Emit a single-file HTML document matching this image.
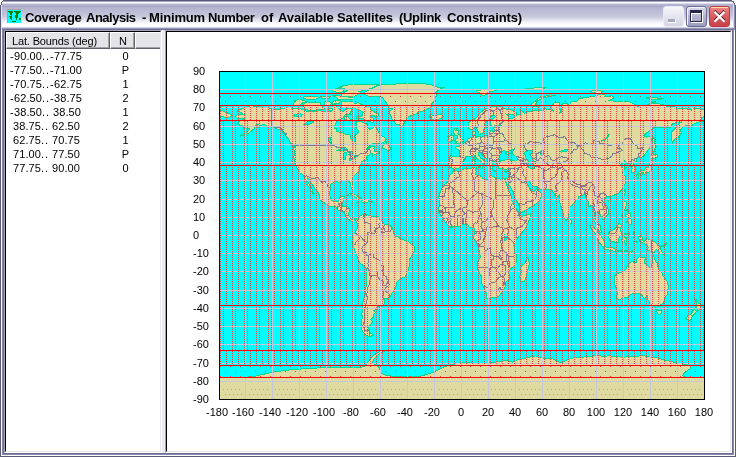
<!DOCTYPE html>
<html><head><meta charset="utf-8"><title>Coverage Analysis</title>
<style>
html,body{margin:0;padding:0;}
span,.yl,.xl{will-change:transform;}
body{width:736px;height:457px;overflow:hidden;position:relative;background:#fff;font-family:"Liberation Sans",sans-serif;font-size:11px;color:#000;}
div,span{position:absolute;box-sizing:border-box;}
#win{left:0;top:0;width:736px;height:457px;background:#e0dfe3;}
.tw{top:10px;font-weight:bold;font-size:13px;white-space:nowrap;line-height:15px;}
.fr{background:#5c5c7c;}
</style></head><body>
<div id="win"></div>
<svg width="736" height="30" shape-rendering="crispEdges" style="position:absolute;left:0;top:0"><rect x="0" y="0" width="736" height="1" fill="#5a5a7a"/><rect x="0" y="1" width="736" height="1" fill="#a2a2c2"/><rect x="0" y="2" width="736" height="1" fill="#ffffff"/><rect x="0" y="3" width="736" height="1" fill="#dcdcec"/><rect x="0" y="4" width="736" height="1" fill="#b6b6d2"/><rect x="0" y="5" width="736" height="1" fill="#b2b2ce"/><rect x="0" y="6" width="736" height="1" fill="#a6a6c6"/><rect x="0" y="7" width="736" height="1" fill="#b4b4d0"/><rect x="0" y="8" width="736" height="1" fill="#b6b6d1"/><rect x="0" y="9" width="736" height="1" fill="#b8b8d2"/><rect x="0" y="10" width="736" height="1" fill="#babad4"/><rect x="0" y="11" width="736" height="1" fill="#bcbcd5"/><rect x="0" y="12" width="736" height="1" fill="#bebed6"/><rect x="0" y="13" width="736" height="1" fill="#c0c0d8"/><rect x="0" y="14" width="736" height="1" fill="#c2c2d9"/><rect x="0" y="15" width="736" height="1" fill="#c5c5db"/><rect x="0" y="16" width="736" height="1" fill="#c9c9de"/><rect x="0" y="17" width="736" height="1" fill="#cfcfe2"/><rect x="0" y="18" width="736" height="1" fill="#d6d6e7"/><rect x="0" y="19" width="736" height="1" fill="#dedeec"/><rect x="0" y="20" width="736" height="1" fill="#e6e6f1"/><rect x="0" y="21" width="736" height="1" fill="#eeeef6"/><rect x="0" y="22" width="736" height="1" fill="#f4f4fa"/><rect x="0" y="23" width="736" height="1" fill="#fafafd"/><rect x="0" y="24" width="736" height="1" fill="#ffffff"/><rect x="0" y="25" width="736" height="1" fill="#ffffff"/><rect x="0" y="26" width="736" height="1" fill="#fcfcfe"/><rect x="0" y="27" width="736" height="1" fill="#d2d2e2"/><rect x="0" y="28" width="736" height="1" fill="#9696b6"/><rect x="0" y="29" width="736" height="1" fill="#6e6e92"/><rect x="0" y="0" width="1" height="30" fill="#5a5a7a"/><rect x="735" y="0" width="1" height="30" fill="#5a5a7a"/><rect x="1" y="3" width="1" height="27" fill="#e6e6f4"/><rect x="734" y="3" width="1" height="27" fill="#8c8cac"/><rect x="733" y="3" width="1" height="25" fill="#d8d8ea"/><path d="M0 0h3v1h-1v1h-1v1h-1zM0 3h1v2h-1z" fill="#fff"/><path d="M3 0h1v1h-1zM2 1h1v1h-1zM1 2h1v1h-1zM0 5h1v1h-1z" fill="#5a5a7a"/><path d="M1 3h1v2h-1z" fill="#5a5a7a"/><path d="M736 0h-4v1h1v1h1v1h1v2h1z" fill="#fff"/><path d="M731 0h1v1h2v1h-2zM733 2h1v1h-1zM734 3h1v2h-1z" fill="#5a5a7a"/></svg>
<div style="left:0;top:30px;width:1px;height:427px;background:#5a5a7a"></div>
<div style="left:1px;top:30px;width:1px;height:425px;background:#fff"></div>
<div style="left:2px;top:28px;width:1px;height:427px;background:#8888a8"></div>
<div style="left:3px;top:29px;width:1px;height:425px;background:#6e6e92"></div>
<div style="left:735px;top:30px;width:1px;height:427px;background:#5a5a7a"></div>
<div style="left:734px;top:30px;width:1px;height:425px;background:#fff"></div>
<div style="left:733px;top:28px;width:1px;height:427px;background:#8888a8"></div>
<div style="left:732px;top:29px;width:1px;height:425px;background:#6e6e92"></div>
<div style="left:0;top:456px;width:736px;height:1px;background:#5a5a7a"></div>
<div style="left:1px;top:455px;width:734px;height:1px;background:#fff"></div>
<div style="left:2px;top:454px;width:732px;height:1px;background:#8888a8"></div>
<div style="left:3px;top:453px;width:730px;height:1px;background:#6e6e92"></div>
<svg width="15" height="15" style="position:absolute;left:7px;top:9px" shape-rendering="crispEdges"><rect x="0" y="0" width="14" height="1" fill="#b09c94"/><rect x="0" y="0" width="1" height="14" fill="#b09c94"/><rect x="1" y="1" width="13" height="13" fill="#00ffff"/><path d="M1 2h5v1h-5zM7 2h7v1h-7zM2 3h4v1h-4zM8 3h5v1h-5zM3 4h2v1h-2zM9 4h3v1h-3zM3 5h2v1h-2zM9 5h2v1h-2zM4 6h1v1h-1zM8 6h3v1h-3zM2 7h3v1h-3zM8 7h3v1h-3zM3 8h2v1h-2zM8 8h3v1h-3zM3 9h2v1h-2zM9 9h1v1h-1zM12 9h2v1h-2zM4 10h1v1h-1zM9 10h1v1h-1zM12 10h2v1h-2zM5 12h4v1h-4z" fill="#008000"/></svg>
<span class="tw" style="left:25.3px;letter-spacing:-0.36px">Coverage</span>
<span class="tw" style="left:86.0px;letter-spacing:-0.5px">Analysis</span>
<span class="tw" style="left:141.5px;letter-spacing:0px">-</span>
<span class="tw" style="left:148.6px;letter-spacing:-0.15px">Minimum</span>
<span class="tw" style="left:208.4px;letter-spacing:-0.48px">Number</span>
<span class="tw" style="left:261px;letter-spacing:0px">of</span>
<span class="tw" style="left:277.6px;letter-spacing:-0.12px">Available</span>
<span class="tw" style="left:336.8px;letter-spacing:-0.11px">Satellites</span>
<span class="tw" style="left:399.4px;letter-spacing:-0.3px">(Uplink</span>
<span class="tw" style="left:446.6px;letter-spacing:-0.13px">Constraints)</span>
<div style="left:663px;top:6px;width:21px;height:21px;border-radius:3px;background:linear-gradient(#f6f6fb,#d4d4e4);border:1px solid #ececf6;"></div>
<div style="left:668px;top:19px;width:8px;height:4px;background:#a8a8bc;border-bottom:1px solid #fff;border-right:1px solid #fff"></div>
<div style="left:686px;top:6px;width:21px;height:21px;border-radius:3px;background:linear-gradient(#dcdcea,#b4b4d0 50%,#9c9cbe);border:1px solid #6c6c94;box-shadow:inset 1px 1px 0 0 #f4f4fa"></div>
<div style="left:691px;top:11px;width:12px;height:12px;border:1px solid #fff;border-top-width:3px;"></div><div style="left:690px;top:10px;width:12px;height:12px;border:1px solid #26264e;border-top-width:3px;"></div>
<div style="left:709px;top:6px;width:21px;height:21px;border-radius:3px;background:linear-gradient(#f09090 0,#e87878 15%,#d85c60 50%,#cc4850 85%,#c84048 100%);border:1px solid #c03840;"></div>
<div style="left:711px;top:7px;width:17px;height:1px;background:#ffdca8"></div>
<svg width="21" height="21" style="position:absolute;left:709px;top:6px"><path d="M5.5 5L15.5 15M15.5 5L5.5 15" stroke="#501018" stroke-width="2.6" stroke-linecap="butt"/><path d="M5.5 5.8L15.5 15.8M15.5 5.8L5.5 15.8" stroke="#fff" stroke-width="2.3" stroke-linecap="butt"/></svg>
<!-- left pane -->
<div style="left:4px;top:30px;width:158px;height:423px;background:#fff;border-left:1px solid #a4a4b8;border-top:1px solid #a4a4b8;border-right:1px solid #fff;border-bottom:1px solid #fff;"></div>
<div style="left:5px;top:31px;width:156px;height:421px;border-left:1px solid #000;border-top:1px solid #000;border-right:1px solid #e8e8f0;border-bottom:1px solid #e8e8f0;"></div>
<!-- header -->
<div style="left:6px;top:32px;width:154px;height:17px;overflow:hidden"><div class="hd" style="left:0px;top:0px;width:104px;height:17px;"></div>
<div class="hd" style="left:104px;top:0px;width:25px;height:17px;"></div>
<div class="hd" style="left:129px;top:0px;width:60px;height:17px;"></div></div>
<style>
.hd{background:#e4e3e8;border-left:1px solid #fff;border-top:1px solid #fff;border-right:1px solid #646068;border-bottom:1px solid #646068;}
.hd:after{content:"";position:absolute;right:0;bottom:0;left:0;top:0;border-right:1px solid #a4a3a8;border-bottom:1px solid #a4a3a8;}
.row{left:0px;width:160px;height:14px;}
.row span{top:0;line-height:14px;white-space:pre;}
.c2{left:110px;width:31px;text-align:center;}
.yl{left:193px;width:40px;text-align:left;line-height:14px;height:14px;}
.xl{top:405px;width:40px;text-align:center;line-height:14px;height:14px;}
</style>
<span style="left:12px;top:34px;line-height:14px;white-space:nowrap;letter-spacing:-0.15px">Lat. Bounds (deg)</span>
<span style="left:119px;top:34px;line-height:14px;">N</span>
<div class="row" style="top:49px"><span style="left:10.2px;letter-spacing:0.1px">-</span><span style="left:14px;letter-spacing:0.1px">90.00</span><span style="left:42.3px;letter-spacing:0.9px">..</span><span style="left:50.2px;letter-spacing:0.1px">-</span><span style="left:54px;letter-spacing:0.1px">77.75</span><span class="c2">0</span></div>
<div class="row" style="top:63px"><span style="left:10.2px;letter-spacing:0.1px">-</span><span style="left:14px;letter-spacing:0.1px">77.50</span><span style="left:42.3px;letter-spacing:0.9px">..</span><span style="left:50.2px;letter-spacing:0.1px">-</span><span style="left:54px;letter-spacing:0.1px">71.00</span><span class="c2">P</span></div>
<div class="row" style="top:77px"><span style="left:10.2px;letter-spacing:0.1px">-</span><span style="left:14px;letter-spacing:0.1px">70.75</span><span style="left:42.3px;letter-spacing:0.9px">..</span><span style="left:50.2px;letter-spacing:0.1px">-</span><span style="left:54px;letter-spacing:0.1px">62.75</span><span class="c2">1</span></div>
<div class="row" style="top:91px"><span style="left:10.2px;letter-spacing:0.1px">-</span><span style="left:14px;letter-spacing:0.1px">62.50</span><span style="left:42.3px;letter-spacing:0.9px">..</span><span style="left:50.2px;letter-spacing:0.1px">-</span><span style="left:54px;letter-spacing:0.1px">38.75</span><span class="c2">2</span></div>
<div class="row" style="top:105px"><span style="left:10.2px;letter-spacing:0.1px">-</span><span style="left:14px;letter-spacing:0.1px">38.50</span><span style="left:42.3px;letter-spacing:0.9px">..</span><span style="left:53px;letter-spacing:0.1px">38.50</span><span class="c2">1</span></div>
<div class="row" style="top:119px"><span style="left:13px;letter-spacing:0.1px">38.75</span><span style="left:41.3px;letter-spacing:0.9px">..</span><span style="left:52px;letter-spacing:0.1px">62.50</span><span class="c2">2</span></div>
<div class="row" style="top:133px"><span style="left:13px;letter-spacing:0.1px">62.75</span><span style="left:41.3px;letter-spacing:0.9px">..</span><span style="left:52px;letter-spacing:0.1px">70.75</span><span class="c2">1</span></div>
<div class="row" style="top:147px"><span style="left:13px;letter-spacing:0.1px">71.00</span><span style="left:41.3px;letter-spacing:0.9px">..</span><span style="left:52px;letter-spacing:0.1px">77.50</span><span class="c2">P</span></div>
<div class="row" style="top:161px"><span style="left:13px;letter-spacing:0.1px">77.75</span><span style="left:41.3px;letter-spacing:0.9px">..</span><span style="left:52px;letter-spacing:0.1px">90.00</span><span class="c2">0</span></div>

<!-- splitter -->
<div style="left:162px;top:30px;width:3px;height:423px;background:#ececf0"></div>
<!-- right pane -->
<div style="left:165px;top:30px;width:567px;height:423px;background:#fff;border-left:1px solid #a4a4b8;border-top:1px solid #a4a4b8;border-right:1px solid #fff;border-bottom:1px solid #fff;"></div>
<div style="left:166px;top:31px;width:565px;height:421px;border-left:1px solid #000;border-top:1px solid #000;border-right:1px solid #e8e8f0;border-bottom:1px solid #e8e8f0;"></div>
<div class="yl" style="top:64px">90</div><div class="yl" style="top:82px">80</div><div class="yl" style="top:100px">70</div><div class="yl" style="top:119px">60</div><div class="yl" style="top:137px">50</div><div class="yl" style="top:155px">40</div><div class="yl" style="top:173px">30</div><div class="yl" style="top:192px">20</div><div class="yl" style="top:210px">10</div><div class="yl" style="top:228px">0</div><div class="yl" style="top:246px">-10</div><div class="yl" style="top:264px">-20</div><div class="yl" style="top:283px">-30</div><div class="yl" style="top:301px">-40</div><div class="yl" style="top:319px">-50</div><div class="yl" style="top:337px">-60</div><div class="yl" style="top:356px">-70</div><div class="yl" style="top:374px">-80</div><div class="yl" style="top:392px">-90</div>
<div class="xl" style="left:197px">-180</div><div class="xl" style="left:223px">-160</div><div class="xl" style="left:250px">-140</div><div class="xl" style="left:277px">-120</div><div class="xl" style="left:304px">-100</div><div class="xl" style="left:331px">-80</div><div class="xl" style="left:358px">-60</div><div class="xl" style="left:385px">-40</div><div class="xl" style="left:412px">-20</div><div class="xl" style="left:441px">0</div><div class="xl" style="left:468px">20</div><div class="xl" style="left:495px">40</div><div class="xl" style="left:522px">60</div><div class="xl" style="left:549px">80</div><div class="xl" style="left:576px">100</div><div class="xl" style="left:603px">120</div><div class="xl" style="left:630px">140</div><div class="xl" style="left:657px">160</div><div class="xl" style="left:684px">180</div>
<svg width="486" height="329" viewBox="0 0 486 329" shape-rendering="crispEdges" style="position:absolute;left:219px;top:71px">
<defs>
<pattern id="p1" x="1" y="0" width="6" height="2" patternUnits="userSpaceOnUse"><rect x="0" y="0" width="1" height="1" fill="#ff3434"/></pattern>
<pattern id="p2" x="1" y="0" width="12" height="2" patternUnits="userSpaceOnUse"><rect x="0" y="0" width="1" height="1" fill="#ff3434"/><rect x="3" y="0" width="1" height="1" fill="#ff3434"/></pattern>
<pattern id="pp" x="1" y="25" width="10" height="10" patternUnits="userSpaceOnUse"><rect x="0" y="0" width="1" height="1" fill="#ff3434"/><rect x="5" y="5" width="1" height="1" fill="#ff3434"/></pattern>
</defs>
<rect width="486" height="329" fill="#00ffff"/>
<path d="M31.7 34.6L37.7 35.5L43.1 36.2L49.8 36.8L52.5 37.7L57.9 38.8L62.0 37.9L67.4 36.8L70.1 36.0L74.1 37.9L79.5 37.3L84.9 38.8L87.6 40.6L94.3 40.8L97.0 40.2L101.0 39.7L105.1 41.0L110.5 40.6L113.2 40.0L113.8 37.9L113.2 35.1L114.5 33.3L117.2 34.2L118.6 36.9L121.3 39.1L123.9 40.6L126.6 38.8L128.0 37.3L132.0 37.3L132.7 39.7L130.7 42.4L132.7 43.7L126.6 43.3L125.3 45.1L123.9 47.5L119.9 48.8L117.2 51.5L115.2 55.2L115.2 57.5L117.2 57.9L117.9 60.6L122.6 61.5L128.0 63.7L131.6 64.1L131.8 67.9L133.4 69.7L134.7 71.2L136.1 70.7L136.3 67.9L135.4 64.8L138.8 62.5L139.4 59.7L137.4 57.5L138.1 55.2L137.4 50.8L142.8 51.0L148.2 53.3L148.9 57.0L150.9 58.3L153.6 57.4L155.6 54.4L158.3 58.4L159.6 61.5L161.7 63.9L165.0 66.1L167.3 68.8L165.7 70.7L161.7 72.8L156.3 72.8L152.9 73.0L149.5 76.1L146.8 79.0L149.5 77.9L152.2 75.2L155.6 75.2L154.9 77.4L155.6 80.3L159.6 81.0L160.3 82.0L156.3 83.4L153.6 84.9L153.6 82.5L152.2 82.5L148.2 84.9L147.3 87.1L148.2 88.5L145.5 89.4L142.8 90.5L142.8 92.5L140.8 94.3L140.1 97.1L140.5 99.8L138.8 101.6L136.1 103.8L133.4 106.6L133.0 109.8L134.0 113.5L134.7 116.2L134.0 118.6L132.7 117.5L131.1 113.8L131.1 111.7L129.3 109.8L127.3 110.2L125.3 109.1L122.6 109.3L121.9 111.3L119.9 111.1L116.5 110.4L114.5 111.3L111.8 113.8L111.4 117.1L110.7 122.6L111.1 125.3L112.8 129.3L114.5 130.6L116.5 131.0L119.2 130.6L120.6 128.1L120.8 126.2L123.3 125.3L125.3 125.5L124.6 129.0L123.9 131.7L123.3 134.4L122.9 135.5L125.3 135.7L128.0 135.5L130.3 137.2L130.0 140.8L129.7 144.5L130.7 146.3L132.0 148.1L133.4 148.5L135.0 147.4L136.7 147.4L138.4 148.8L138.8 149.4L140.8 145.4L141.7 144.3L144.2 143.7L145.9 141.9L146.4 143.5L145.8 145.4L148.2 143.5L150.5 144.8L153.6 145.2L156.3 145.4L159.0 145.0L160.3 147.2L161.0 149.0L163.0 149.9L165.3 153.6L168.4 153.7L171.1 154.5L173.1 156.5L174.5 160.9L175.1 163.6L175.1 164.5L177.2 165.4L179.2 165.8L182.5 168.7L184.6 168.9L187.3 169.8L190.0 170.9L192.2 173.2L194.9 174.2L195.5 177.6L195.3 180.9L193.3 184.0L192.0 186.4L190.2 188.6L190.0 191.8L190.0 196.4L189.0 200.0L187.5 203.7L186.1 206.2L183.9 206.4L181.9 207.7L179.2 209.5L177.2 211.9L177.0 215.5L175.1 219.2L172.4 223.2L170.4 226.5L168.4 228.1L165.7 227.5L163.8 226.5L165.4 229.2L165.7 231.0L164.9 233.7L161.7 235.4L159.0 235.4L158.6 238.3L154.9 239.2L156.3 241.9L154.5 243.8L154.3 246.5L151.6 248.3L153.6 250.5L151.6 253.8L149.5 256.2L150.3 259.8L150.2 261.1L154.5 264.2L150.9 265.6L147.5 264.7L145.5 262.9L143.5 260.2L142.1 255.6L142.1 252.0L142.5 249.2L143.7 246.5L142.8 243.8L143.2 240.1L143.5 236.5L143.5 232.3L144.8 228.3L146.2 222.8L146.2 219.2L147.5 213.7L147.5 207.3L147.9 200.9L147.7 197.8L145.5 195.5L141.5 192.7L139.7 189.6L138.5 186.4L136.7 181.8L135.0 177.3L133.1 175.4L133.0 172.7L134.3 170.7L134.7 169.1L133.4 168.5L133.5 166.3L134.7 164.5L134.7 163.0L136.3 161.8L136.7 159.9L138.4 157.6L138.1 154.5L138.2 152.1L137.1 150.8L136.9 149.4L135.4 148.3L134.3 149.6L134.2 151.2L132.7 150.5L131.0 149.6L129.7 149.0L128.4 146.6L127.0 146.3L126.9 144.5L124.6 140.8L123.3 140.4L121.3 139.5L119.2 139.0L117.2 136.3L115.2 135.0L112.5 135.9L109.8 134.8L107.8 133.5L105.1 131.7L102.4 129.9L100.4 127.5L100.6 125.3L99.7 122.6L97.0 118.9L95.1 116.6L93.6 113.8L91.6 111.7L90.3 108.0L88.1 106.7L88.0 108.9L89.6 112.0L90.9 114.4L92.6 117.1L93.6 120.2L95.0 122.2L94.0 122.6L91.6 119.3L91.3 117.1L88.9 114.9L87.8 113.8L88.6 112.6L86.6 109.8L85.3 106.7L84.6 104.9L83.1 102.9L80.2 101.6L78.4 98.0L77.5 95.6L75.7 92.5L75.0 90.9L75.3 88.0L74.8 86.1L75.4 82.5L75.4 80.1L74.5 76.5L76.8 76.5L76.8 75.2L74.8 73.4L71.4 71.6L70.1 68.8L67.4 65.6L66.0 63.4L63.3 60.6L61.3 58.3L58.6 58.3L56.6 57.0L53.9 55.7L51.2 55.2L48.5 55.2L45.8 53.7L43.1 53.7L41.1 55.5L38.0 56.6L38.4 53.9L40.4 53.0L37.7 53.9L35.7 56.1L35.0 57.9L31.7 60.6L29.0 62.5L25.6 63.9L22.9 64.8L20.9 65.2L24.2 62.8L26.9 61.5L29.6 59.7L30.6 57.5L28.3 57.9L26.3 57.4L24.2 57.0L24.2 55.2L20.9 54.3L18.9 52.4L20.2 50.1L20.9 49.3L24.9 48.8L25.6 47.0L22.9 47.0L18.2 47.0L16.2 45.0L18.9 43.7L22.2 43.9L24.9 43.7L22.9 42.4L21.6 41.1L18.2 39.9L19.5 38.9L22.9 37.9L25.6 36.4L29.6 35.5ZM144.2 22.0L150.9 18.7L154.9 16.5L157.6 14.7L164.4 13.6L175.1 13.1L188.6 12.5L202.1 12.3L212.9 13.8L218.3 16.0L225.7 16.0L219.6 18.7L216.9 21.5L218.3 24.2L215.6 26.9L216.2 29.7L212.9 32.4L212.9 34.2L212.9 36.0L208.8 37.9L206.1 39.7L200.7 40.6L196.7 43.3L192.0 44.8L188.6 46.1L187.3 48.8L185.2 51.5L184.6 54.6L182.5 55.3L180.5 53.9L177.2 53.3L175.1 50.6L173.1 47.9L171.8 45.1L170.4 42.4L170.4 39.7L173.8 37.9L169.1 36.9L169.1 34.6L167.7 32.4L165.7 29.7L163.7 26.9L159.0 25.6L153.6 26.0L149.5 25.5L146.8 23.8ZM153.6 51.7L150.9 50.6L146.8 49.7L143.5 47.0L137.4 47.0L138.1 45.1L142.8 45.1L144.2 41.5L141.5 39.7L136.7 37.9L136.1 36.4L128.0 36.9L122.6 36.0L122.6 30.6L128.0 30.0L133.4 30.2L134.7 32.4L139.4 31.8L142.8 33.7L147.5 35.7L150.9 36.9L152.2 38.8L156.3 41.5L159.6 43.0L159.0 45.1L156.3 46.1L154.9 44.2L151.6 45.1L154.9 47.9L154.3 50.1ZM83.5 34.2L87.6 30.9L95.7 31.5L101.0 31.1L101.7 34.2L105.8 37.3L105.1 38.9L99.7 38.8L94.3 39.3L88.9 39.1L85.5 37.9L84.2 36.0ZM74.1 33.3L76.1 34.8L80.2 34.2L84.2 31.5L86.9 30.6L84.2 29.1L79.5 28.7L74.8 29.7L75.4 31.5ZM122.6 25.1L134.7 25.6L137.4 24.2L141.5 21.5L140.1 20.5L146.8 19.1L153.6 16.9L159.0 14.5L160.3 13.4L148.2 13.1L134.7 13.3L125.3 14.5L119.9 16.0L125.3 17.8L128.0 19.6L125.3 21.5L122.6 23.3ZM113.2 18.7L119.9 16.9L123.9 18.7L125.3 20.5L119.9 21.8L114.5 20.5ZM113.2 24.6L119.9 24.9L123.9 25.3L132.0 26.4L134.7 26.9L134.0 28.4L126.6 28.9L118.6 28.6L117.9 26.4ZM84.9 27.5L90.3 28.7L97.0 28.0L100.4 26.4L95.7 25.1L88.9 25.6L84.9 26.0ZM102.4 27.5L110.5 27.8L111.1 25.5L105.1 25.1L102.4 26.0ZM113.8 33.1L120.6 32.4L121.3 30.0L114.5 29.7L113.8 31.5ZM105.1 34.2L111.8 34.0L112.5 31.5L109.1 30.0L105.1 31.1ZM108.5 38.8L113.2 39.5L113.8 37.9L111.1 36.9ZM125.3 45.1L129.3 45.7L130.7 47.9L134.0 48.8L130.7 50.1L127.3 49.3L125.3 47.9ZM162.6 77.6L165.0 72.5L167.6 70.7L167.1 73.4L170.4 74.7L171.5 77.9L170.4 79.4L167.7 78.9L165.7 77.9ZM69.7 71.9L74.1 73.4L76.3 76.3L73.4 75.6ZM128.1 124.6L130.7 122.6L134.0 122.4L138.8 125.1L142.5 127.7L138.1 128.2L137.4 126.8L134.7 125.0L132.0 123.7L130.0 124.4ZM142.3 130.8L144.2 128.2L148.2 128.4L150.3 130.6L147.5 131.3L145.9 132.2L144.2 131.3ZM137.0 131.0L139.7 131.3L139.7 131.9L137.0 131.7ZM152.0 130.8L154.0 131.0L154.0 131.7L152.0 131.7ZM212.2 43.5L214.9 45.0L218.3 43.9L220.9 43.3L222.7 43.9L224.2 45.7L222.3 47.3L217.6 49.0L214.2 48.2L211.9 48.1L212.9 47.0L210.2 46.2L212.9 45.5L210.2 45.0ZM234.8 73.2L237.8 72.8L241.2 72.1L244.4 71.2L243.6 70.7L244.8 68.7L242.9 67.9L242.5 66.6L240.9 65.0L240.3 63.4L238.5 62.5L239.8 60.6L240.1 59.5L237.1 59.4L238.5 57.7L235.8 57.7L234.7 59.7L234.1 61.5L235.8 63.4L236.0 64.6L238.1 64.5L238.5 66.5L238.2 67.4L236.4 67.4L236.8 68.8L235.5 70.1L237.8 70.8L236.4 71.6ZM234.4 69.4L234.1 67.2L235.0 65.0L232.7 63.7L231.0 65.0L229.0 65.7L229.7 67.6L228.6 69.7L229.7 70.7L231.7 70.1ZM257.3 19.6L264.1 18.7L270.8 18.0L278.9 18.4L274.8 20.2L268.1 21.1L271.5 22.4L267.4 23.6L264.7 24.7L261.4 23.3L260.7 22.0L257.3 20.9ZM311.9 34.2L314.6 35.5L319.3 35.7L316.6 33.3L317.9 30.6L320.6 28.4L326.0 26.4L331.4 25.3L336.8 24.2L331.4 24.0L326.0 25.3L319.3 27.3L315.9 30.6L312.6 32.8ZM370.5 20.5L377.2 19.1L384.0 20.5L381.3 22.4L374.5 21.5ZM427.1 26.9L433.8 26.0L439.2 27.3L444.6 27.8L440.5 28.2L431.1 28.2ZM431.1 30.7L435.2 30.0L435.8 31.1L432.5 31.5ZM483.0 34.6L485.0 34.2L485.0 35.3L483.0 35.3ZM0.0 34.2L3.4 34.6L3.4 35.1L0.0 35.3ZM305.8 17.8L316.6 16.9L326.0 16.9L323.3 18.4L312.6 18.7ZM230.4 97.1L229.7 94.0L230.6 89.8L230.1 86.1L231.7 84.9L235.8 85.2L239.8 85.4L240.7 83.4L240.9 80.7L239.1 78.3L236.4 77.2L236.2 76.1L238.5 75.6L240.3 75.8L240.1 73.9L241.2 74.5L242.8 74.3L244.5 73.0L244.8 71.6L247.2 70.8L248.2 69.4L249.0 67.9L250.6 67.0L252.2 66.8L254.0 66.6L254.4 65.6L253.7 63.4L253.5 60.6L255.3 60.3L256.8 59.4L256.4 61.5L257.1 62.1L256.0 63.4L255.7 64.6L257.2 65.6L257.3 66.1L258.9 65.7L260.7 65.4L261.8 66.3L264.5 65.4L267.4 64.8L268.8 65.4L269.4 64.5L270.8 63.7L270.8 61.5L271.5 59.9L272.8 59.4L274.2 60.6L275.2 60.1L275.2 58.3L274.2 57.4L274.2 56.6L276.9 55.9L280.2 56.1L283.2 55.3L280.9 54.3L277.5 54.4L273.5 55.3L271.5 54.3L271.2 52.4L271.2 50.1L272.8 48.8L275.5 46.4L276.6 45.3L274.8 44.6L272.4 44.8L271.2 47.0L270.1 48.4L267.4 50.1L265.7 52.1L265.7 53.9L267.8 55.2L267.2 56.4L265.0 57.7L264.7 59.7L264.1 62.1L262.0 62.5L261.6 63.5L260.0 63.5L259.6 62.1L258.7 59.7L257.7 57.4L256.8 56.4L256.8 55.3L255.3 57.2L253.3 58.6L251.7 58.6L250.0 57.4L249.4 55.2L249.2 52.4L250.6 50.6L254.0 48.8L256.6 47.3L258.7 45.5L260.0 43.3L262.0 41.1L263.4 40.2L266.1 38.2L268.8 36.9L272.1 36.0L276.2 35.1L280.2 35.1L284.3 36.4L282.9 37.5L287.0 38.0L291.0 38.6L297.1 41.0L298.0 42.8L296.4 44.1L292.3 43.7L289.0 43.1L287.0 43.0L289.4 45.1L289.4 47.1L292.3 47.9L293.7 47.0L296.4 46.8L297.1 44.6L299.8 43.3L301.8 43.9L302.0 41.5L301.5 39.7L304.5 40.2L305.1 42.4L307.8 41.1L313.9 39.7L315.9 40.0L320.6 39.3L324.0 39.1L324.0 37.5L329.4 38.4L332.8 39.1L334.8 40.2L332.8 37.9L332.5 35.1L334.8 32.4L336.8 30.9L340.2 31.8L340.2 34.2L340.8 37.9L341.5 39.7L340.2 42.4L342.2 41.5L342.9 38.8L342.2 35.1L343.5 32.4L347.6 32.9L351.0 33.3L352.3 30.6L358.4 30.0L359.7 27.8L366.4 26.4L374.5 25.6L382.6 22.9L386.7 24.2L385.3 25.5L392.7 24.9L395.4 26.6L390.7 29.3L394.7 30.2L401.5 30.6L409.6 30.2L413.6 32.4L417.0 34.2L418.3 35.5L421.7 34.2L427.1 34.2L431.1 32.8L432.5 32.0L439.2 32.6L444.6 33.7L448.0 35.3L455.4 35.3L458.1 37.5L462.1 37.5L467.5 37.7L472.2 39.1L471.5 36.9L475.6 37.1L481.0 37.9L485.0 38.8L485.0 45.7L482.3 47.0L483.7 50.2L481.0 50.6L477.6 51.9L474.2 53.3L472.2 55.2L467.5 54.6L464.1 55.5L462.5 57.9L461.4 59.2L462.4 61.9L460.8 64.6L458.1 67.6L456.0 68.1L453.6 71.6L452.3 67.9L452.3 64.3L452.7 60.6L455.4 58.4L458.1 54.3L460.8 52.4L463.4 50.6L458.7 51.9L454.0 52.1L451.3 56.1L448.6 56.6L443.2 56.1L435.2 56.4L431.1 59.4L427.7 61.9L424.8 64.6L427.7 66.1L430.4 65.7L432.9 67.4L431.8 70.7L431.8 73.4L431.1 76.5L429.1 79.2L426.4 82.5L424.4 85.2L421.7 86.5L420.1 85.8L418.6 87.4L417.2 89.1L417.2 90.2L414.3 92.2L415.3 94.2L416.8 97.1L416.8 99.8L415.6 100.9L412.9 101.8L412.7 99.8L413.1 97.1L412.3 95.6L410.9 95.3L411.3 92.7L410.0 91.6L406.9 93.1L405.9 93.8L406.9 90.7L405.5 90.0L402.8 92.9L401.2 93.4L402.1 95.3L402.8 96.5L405.5 96.0L407.5 96.5L405.2 98.4L403.2 100.7L404.8 103.5L406.6 106.2L406.7 108.0L406.2 109.8L406.9 110.7L406.2 112.9L404.8 115.3L403.5 118.0L401.5 120.0L400.1 121.9L397.4 123.1L395.8 123.9L392.7 125.3L391.1 125.7L391.1 127.5L390.3 125.3L388.4 125.1L386.2 127.1L385.0 129.9L386.0 132.6L388.3 135.3L389.6 139.9L389.6 143.0L387.1 145.4L386.0 147.2L384.0 148.6L383.7 146.3L381.9 145.4L380.6 142.6L378.6 141.4L377.9 139.9L377.2 141.7L376.5 144.5L376.1 147.6L377.6 149.4L377.9 151.4L379.2 152.1L380.6 153.6L381.8 156.3L381.9 159.6L382.9 161.9L381.7 161.8L379.0 159.4L377.9 157.2L377.6 154.5L376.8 152.3L375.2 149.9L374.9 148.1L375.5 145.4L375.2 141.7L374.5 139.0L374.1 135.3L372.9 133.9L370.9 135.7L369.5 135.3L369.8 131.7L368.5 128.4L366.8 126.2L366.2 123.9L364.4 123.9L362.4 124.8L359.7 125.7L359.0 128.1L357.0 129.1L353.6 133.9L350.7 136.3L350.5 140.3L350.0 143.5L349.6 145.7L348.9 147.6L347.9 148.5L346.9 149.7L345.3 147.2L344.5 143.5L343.3 140.8L342.6 137.2L341.3 133.5L340.6 129.9L340.4 126.2L340.2 124.4L337.5 126.6L335.5 123.9L336.8 123.0L334.8 121.7L333.2 119.9L332.1 118.4L328.7 118.4L325.4 118.8L321.3 118.0L319.3 116.2L318.3 115.1L315.9 116.0L313.2 114.4L311.2 112.0L310.1 109.8L308.2 109.3L307.2 110.7L308.1 113.1L309.9 115.8L310.3 118.0L311.2 119.5L311.9 117.1L312.2 120.2L315.2 120.4L317.9 117.5L318.5 116.6L318.6 119.5L321.3 121.3L323.1 123.5L321.7 127.1L320.2 129.9L318.6 131.7L316.6 133.5L313.0 135.3L308.5 138.4L303.1 141.2L301.1 141.4L300.4 138.1L300.0 134.4L297.7 129.9L295.3 125.3L294.4 121.1L292.6 118.9L291.7 116.2L289.7 113.5L289.7 110.7L288.7 113.5L288.6 113.8L287.4 112.6L286.4 109.8L286.0 107.6L288.7 107.5L289.7 104.7L290.7 101.6L291.0 98.9L291.3 97.4L289.0 97.6L287.0 98.7L283.7 97.4L281.6 98.0L279.5 97.4L279.1 94.3L277.9 92.5L277.9 91.2L280.2 90.9L281.6 89.8L284.9 89.4L287.6 88.0L289.7 88.0L291.7 89.2L294.4 89.8L297.1 89.8L298.5 88.7L298.4 87.1L296.4 85.2L294.0 83.4L292.8 82.0L293.7 80.3L295.3 78.5L293.7 78.7L291.7 79.4L289.7 80.3L290.1 82.0L291.7 82.0L290.3 82.5L288.3 83.6L287.5 83.2L286.3 81.8L287.8 80.7L285.6 79.8L284.0 79.8L282.5 82.0L281.0 84.3L280.2 86.1L279.8 87.4L280.5 88.9L281.6 89.4L279.5 90.2L277.8 90.7L277.5 90.2L274.8 90.2L274.2 91.2L273.2 90.9L273.1 92.5L273.9 93.4L274.8 95.3L273.5 95.6L273.8 98.0L272.8 98.0L271.7 97.4L271.1 95.3L270.8 93.4L268.8 90.7L268.8 88.5L267.4 87.1L264.1 85.2L262.7 83.0L261.8 82.0L261.0 81.4L259.1 82.0L259.2 84.0L260.8 85.2L261.6 87.2L264.1 88.3L264.1 89.1L267.4 91.4L265.4 90.9L264.7 92.2L265.5 93.4L264.2 95.3L263.7 94.9L264.1 93.4L263.1 91.4L262.0 90.3L260.0 89.2L258.9 88.3L256.6 86.3L256.2 84.7L254.4 83.6L252.6 84.7L250.6 86.0L248.6 85.4L246.8 85.8L246.8 87.6L245.5 89.1L243.2 90.7L242.1 92.5L242.8 93.8L241.6 95.8L239.8 97.4L236.4 97.6L235.1 98.9L234.0 97.6L232.7 96.7ZM0.0 38.8L4.0 40.0L9.4 42.4L13.5 44.1L10.1 47.0L6.1 46.4L2.0 45.1L0.0 45.7ZM234.6 99.3L235.4 99.1L238.5 100.2L239.8 100.5L242.5 99.3L244.5 98.0L246.5 97.4L249.2 97.4L252.6 97.1L255.7 96.5L256.4 97.4L257.3 97.1L256.6 98.9L257.1 100.7L256.2 102.0L256.2 102.9L257.6 104.0L259.3 104.7L260.3 104.5L263.0 105.6L263.7 107.5L266.1 108.2L268.1 109.3L269.4 108.0L269.4 105.8L271.5 104.5L273.5 105.1L276.2 106.9L279.5 107.6L281.6 108.2L283.6 107.1L285.6 107.5L286.3 109.8L286.4 110.7L287.6 113.5L288.3 115.7L289.7 119.3L290.3 120.9L292.1 124.4L292.6 126.2L292.8 129.9L294.4 131.7L295.4 135.9L297.7 138.1L299.8 140.8L300.8 142.1L300.7 143.5L302.5 145.4L305.8 144.1L308.5 143.9L311.5 142.8L311.2 145.4L309.9 149.9L307.8 154.5L305.8 158.1L303.5 160.9L301.1 163.6L299.1 166.3L297.1 169.1L296.0 171.8L295.0 174.5L295.4 177.3L295.7 180.9L297.1 183.6L297.2 187.3L297.3 190.9L296.4 194.0L293.7 196.0L292.2 197.3L289.7 200.6L290.2 204.6L290.3 208.2L287.0 211.0L286.6 211.9L286.7 214.6L285.6 217.3L284.3 219.2L282.9 221.5L280.9 224.1L278.9 225.9L277.1 226.5L273.5 226.6L269.4 227.9L267.4 227.0L267.2 224.1L267.2 221.9L265.8 219.2L264.7 216.6L263.0 213.2L262.0 206.4L262.0 204.6L260.4 201.9L258.7 198.2L258.4 195.5L258.4 193.3L259.3 189.1L261.1 186.9L261.1 184.5L260.3 180.9L259.1 175.4L258.7 173.6L257.3 171.2L255.3 168.5L254.4 165.8L255.3 163.6L255.4 160.3L255.6 157.6L254.2 156.3L251.9 156.7L249.9 155.8L248.6 153.2L245.9 153.0L243.8 153.6L242.1 154.7L239.8 155.8L237.8 155.2L235.1 155.2L232.4 156.5L230.1 155.0L227.7 152.7L225.7 150.8L224.7 149.0L224.0 147.2L222.3 144.8L220.0 142.1L219.9 140.3L218.9 137.7L220.3 135.3L220.5 131.7L220.7 129.3L219.6 126.2L220.9 121.7L222.6 118.0L225.0 114.0L227.3 112.2L229.0 110.7L229.4 108.9L229.3 107.1L231.0 103.8L233.1 102.5L234.4 99.8ZM308.9 186.4L310.3 192.7L309.5 195.5L308.5 200.0L307.2 205.5L305.8 210.1L303.8 211.0L301.8 210.1L300.8 205.5L302.2 201.5L301.8 196.4L303.8 193.7L305.8 192.4L307.2 189.1ZM395.4 204.6L396.1 204.2L399.5 202.0L402.8 200.9L405.5 200.0L407.3 197.3L407.1 195.5L409.0 196.0L409.2 194.0L410.9 191.8L413.3 190.0L414.9 191.5L417.1 191.7L417.6 188.7L418.7 187.1L421.0 185.5L421.1 186.4L425.0 186.4L426.8 186.7L425.7 189.1L425.0 191.8L427.1 193.3L430.0 196.0L432.2 196.4L433.3 191.8L433.4 188.2L434.1 184.2L435.8 187.3L436.2 190.6L438.3 191.8L439.2 196.4L439.6 198.9L442.6 201.3L443.9 204.6L445.7 207.0L448.0 210.1L448.9 212.8L449.4 216.4L448.6 220.1L448.0 223.7L446.3 226.1L445.3 229.2L444.6 232.3L441.9 233.6L439.6 235.6L437.4 234.3L435.8 235.2L433.1 234.3L431.1 232.8L430.4 230.1L429.1 229.2L428.4 226.5L428.0 223.9L427.1 225.9L425.7 227.9L424.8 227.4L423.0 224.3L420.3 222.8L416.3 222.1L412.3 223.2L409.6 224.6L408.9 226.3L404.2 226.3L401.5 228.3L398.8 228.1L397.4 227.0L398.1 223.7L398.4 221.9L397.4 219.2L396.4 214.6L395.1 211.9L395.8 208.2ZM437.4 238.7L439.9 239.4L442.3 239.0L442.2 241.4L440.5 243.8L439.2 243.8L438.3 241.6ZM475.2 227.2L477.3 228.8L478.9 231.0L479.6 232.8L482.7 233.2L481.6 236.1L480.7 237.9L478.7 240.3L478.0 239.8L478.3 237.8L476.6 236.1L477.9 234.7L477.9 231.9L476.0 228.8ZM475.2 238.3L477.3 240.5L475.6 243.2L473.3 245.2L472.6 248.1L470.9 249.4L468.2 248.7L466.8 247.8L468.8 244.7L472.2 242.9L474.2 239.2ZM370.9 154.3L373.9 155.0L377.6 159.9L381.9 164.5L383.3 167.2L385.3 170.0L385.0 175.1L383.3 175.1L379.9 171.4L377.6 166.3L375.5 161.4L373.2 159.0ZM384.4 176.9L386.0 175.4L388.7 176.7L391.8 176.3L394.3 177.1L396.8 178.7L396.6 180.4L392.0 179.6L388.7 178.7L386.0 178.0ZM398.1 179.4L400.1 179.6L402.8 179.8L405.5 179.8L408.2 179.6L408.2 180.5L404.2 180.9L400.1 180.9L398.1 180.5ZM408.9 183.3L410.9 180.9L413.6 179.8L413.6 180.5L411.6 182.2L409.6 183.5ZM389.3 161.8L390.0 160.9L392.4 159.9L394.7 158.7L398.1 155.4L400.1 151.7L402.8 154.8L401.2 157.2L401.5 160.3L402.8 162.7L400.8 165.4L399.5 168.1L399.2 171.8L396.8 172.0L394.7 170.3L392.7 170.5L391.0 169.6L389.6 165.4ZM403.9 163.0L405.2 162.1L408.2 162.7L410.9 161.6L410.0 163.8L405.2 163.8L405.8 166.1L408.6 166.1L406.9 167.8L407.9 171.8L407.3 174.2L406.2 172.7L405.2 169.6L404.6 170.9L404.7 174.7L403.4 174.3L403.4 170.7L402.6 169.4L403.9 164.9ZM414.3 160.9L415.6 161.8L415.3 164.5L414.5 166.0L414.3 163.0ZM414.9 170.0L418.3 170.0L418.7 171.1L414.9 170.9ZM419.0 166.0L421.0 165.2L423.0 166.0L423.7 169.6L425.0 170.5L427.7 167.6L429.8 168.1L432.5 169.2L436.5 171.4L438.9 174.2L441.2 175.4L440.9 177.3L442.6 180.5L445.3 183.3L443.2 183.3L440.5 181.8L439.2 179.4L437.2 178.5L435.6 180.5L435.2 181.4L432.5 181.1L429.8 179.1L428.4 179.8L428.1 177.8L429.4 176.9L428.4 174.5L425.0 172.5L422.4 171.4L421.4 171.8L420.7 169.6L422.6 168.7L420.3 168.1L419.0 166.9ZM442.6 174.5L445.3 174.5L447.3 172.2L447.7 173.6L445.3 176.0L442.6 175.4ZM404.8 130.8L407.1 131.0L407.3 134.4L406.2 137.2L407.5 138.6L409.6 139.4L409.6 141.5L408.2 139.4L406.2 139.5L405.0 138.4L404.2 136.3L404.6 134.8ZM406.9 151.7L408.9 149.0L411.6 146.6L412.9 149.9L412.7 153.0L411.6 153.9L409.6 152.7L408.9 150.5ZM406.9 143.0L408.5 143.5L411.6 141.7L411.8 144.5L410.9 146.3L409.6 146.3L408.2 147.7L407.5 146.3L406.9 145.4ZM400.4 149.0L403.5 145.4L403.8 143.9L402.8 144.8L400.4 148.5ZM418.9 102.5L421.0 99.8L425.0 99.6L426.8 96.5L429.1 96.5L430.8 93.4L431.1 90.5L432.9 89.1L433.7 92.0L432.5 94.7L432.3 97.4L432.2 99.4L430.8 100.7L429.4 101.3L427.1 101.5L425.5 103.5L424.4 101.6L421.7 102.0L419.0 102.7ZM417.6 103.5L419.9 103.3L419.7 107.1L418.6 108.0L417.9 105.6L417.2 104.4ZM421.0 102.9L423.7 102.0L423.4 103.5L421.7 104.7ZM431.1 88.9L431.5 85.8L433.4 81.8L435.2 83.8L438.3 83.8L438.5 85.6L435.6 88.0L432.5 87.1L431.8 88.0ZM433.8 65.6L435.2 67.9L435.6 73.4L437.2 75.2L435.2 78.9L435.8 80.3L433.8 80.7L433.8 77.0L433.8 72.5L433.5 68.8ZM406.2 118.6L406.9 119.3L405.5 123.9L404.4 122.6L405.5 118.9ZM388.9 129.3L391.4 128.1L392.0 129.0L390.7 131.2L389.1 130.8ZM350.3 146.6L351.9 149.0L352.7 151.7L351.6 153.2L350.5 153.6L350.0 150.8L350.0 148.5ZM259.3 95.3L263.4 94.9L263.0 97.6L259.6 96.0ZM253.7 89.8L255.6 89.8L255.4 93.1L254.0 93.4ZM254.2 86.9L255.3 86.1L255.2 88.9L254.4 88.7ZM274.2 99.6L277.9 100.2L277.8 100.7L274.2 100.4ZM286.0 100.5L289.0 99.6L288.3 100.7L287.0 101.5ZM0.0 306.2L13.5 306.2L26.9 306.2L33.7 305.7L40.4 304.1L53.9 301.2L67.4 299.2L80.8 298.1L94.3 297.3L107.8 296.1L121.3 296.4L134.7 296.8L141.5 296.4L145.5 295.0L147.5 293.1L149.8 290.2L151.6 287.5L154.3 284.8L157.0 282.6L161.0 280.4L164.4 279.3L165.7 280.2L162.3 281.7L159.6 283.5L157.0 285.9L154.9 288.4L153.6 290.8L154.3 292.6L157.6 294.4L160.3 296.6L161.0 299.3L161.7 302.1L167.1 304.4L175.1 305.5L185.9 305.9L194.0 305.9L200.7 305.4L207.5 303.4L215.6 300.8L223.6 296.6L230.4 294.2L235.8 293.0L242.5 291.7L256.0 292.1L269.4 292.1L282.9 290.2L287.0 289.3L293.7 291.1L296.4 289.3L303.1 287.9L309.9 286.2L316.6 284.8L319.3 286.2L326.0 287.5L334.1 288.0L336.8 289.3L340.8 291.5L343.5 291.1L347.6 289.3L353.0 287.1L361.1 286.2L370.5 285.7L377.2 284.4L384.0 285.3L390.7 284.8L397.4 285.7L404.2 286.2L410.9 285.3L417.6 285.1L424.4 284.8L431.1 286.0L437.8 286.6L444.6 289.0L451.3 290.2L458.1 292.1L464.8 293.3L471.5 294.8L471.5 297.5L466.1 301.2L463.4 304.8L467.5 306.2L478.3 306.2L485.0 306.2L485.0 328.5L0.0 328.5Z" fill="#dfdba0" stroke="#00d890" stroke-width="1" stroke-linejoin="miter"/>
<path d="M305.8 81.0L309.2 79.8L311.9 79.2L313.9 79.8L313.6 82.0L311.6 82.5L310.9 83.8L313.2 86.5L313.9 88.9L315.2 90.2L313.9 91.6L315.0 94.3L315.0 97.1L312.6 97.6L310.3 96.5L308.5 95.3L308.9 92.5L310.3 91.1L308.5 88.9L306.8 86.5L305.8 83.4ZM341.5 80.3L344.9 78.9L348.9 79.0L348.9 79.9L344.9 80.3L342.2 81.4ZM321.7 80.1L324.4 79.8L325.1 82.5L323.3 84.5L321.4 83.8ZM382.6 70.3L385.3 69.2L388.7 66.1L390.4 63.0L389.8 63.0L387.3 67.0L384.0 69.2L382.6 69.7ZM118.6 79.2L122.6 77.0L126.0 76.1L128.4 78.9L128.4 79.8L125.3 79.8L121.3 79.4ZM124.2 88.0L126.2 88.0L127.3 83.4L128.0 81.0L125.3 81.6L124.2 84.3ZM128.7 80.7L132.7 80.7L134.7 83.0L132.4 85.8L131.4 85.8L130.0 83.4L130.3 82.1ZM130.3 88.5L133.4 87.1L136.1 86.5L136.1 87.1L133.4 88.9L130.7 89.1ZM135.0 85.6L138.8 85.6L139.7 84.3L137.4 84.3L135.4 84.9ZM285.6 164.0L288.3 164.1L288.3 167.2L287.0 169.4L285.6 169.1L285.2 166.3ZM109.1 67.0L111.1 66.5L112.5 71.6L111.8 72.7L109.8 69.7ZM74.1 44.2L79.5 42.4L83.5 43.3L82.2 45.5L76.8 45.7ZM84.9 53.3L88.9 50.6L94.3 50.1L95.0 51.0L91.6 52.8L87.6 53.7Z" fill="#00ffff" stroke="#00d890" stroke-width="1"/>
<path d="M52.5 37.7L52.5 54.6L55.2 55.2L57.3 57.2L60.0 55.7L62.6 57.9L65.3 61.5L67.4 62.8L66.7 64.8M76.8 74.5L114.2 74.5L114.8 74.3L117.2 75.9L119.9 76.9L121.9 77.0L123.3 76.7L128.4 79.8L130.0 80.7L131.4 82.0L131.5 86.1L130.7 88.0L136.1 86.5L136.1 85.4L139.4 84.3L141.5 82.5L146.2 82.5L147.5 81.2L149.3 78.1L150.9 78.3L151.2 81.0L152.2 82.5M84.7 105.3L88.0 104.9L93.0 107.5L96.7 107.5L96.7 106.6L99.0 106.6L101.7 110.4L103.7 111.7L104.7 110.2L106.4 110.7L108.5 114.4L109.1 116.4L111.6 117.3M118.3 138.1L119.0 135.3L120.6 135.2L119.9 133.2L119.9 132.1L122.3 132.1L123.5 130.8M122.3 132.1L122.3 135.5L122.7 135.5M122.3 135.5L122.2 138.3L121.1 139.5M122.2 138.3L123.3 139.2L124.2 140.3M124.9 140.8L126.6 139.2L128.0 137.7L130.4 137.2M127.0 144.3L129.7 144.6M130.8 149.7L131.2 147.2M137.6 151.4L138.4 148.8M146.4 143.0L144.3 145.4L145.0 148.1L145.0 151.0L148.2 151.7L151.6 153.2L151.2 156.3L151.8 158.3L152.0 160.9L152.4 162.3M152.4 162.3L148.5 161.4L149.0 163.4L148.2 164.5L148.9 166.7L148.3 172.2M148.3 172.2L147.3 171.4L144.3 168.9L141.2 164.7M141.2 164.7L138.2 163.8L136.3 161.9M141.2 164.7L140.8 167.2L137.0 170.7L136.1 173.6L134.3 172.5L134.3 170.7M148.3 172.2L144.2 174.5L142.8 177.8L144.2 181.4L147.5 181.8L147.4 184.5L148.9 184.5M148.9 184.5L149.9 187.3L149.5 190.9L148.9 192.7L149.5 194.2L148.9 196.4M148.9 196.4L147.7 197.8M148.9 196.4L150.2 200.0L150.6 203.7L152.0 206.0M148.9 184.5L152.9 182.4L154.5 182.7L154.5 186.0L159.0 188.7L161.3 189.5L161.4 194.0L164.0 194.2L164.1 196.4L164.9 197.3L164.4 200.6M164.4 200.6L163.0 199.7L159.2 200.2L158.2 205.0M158.2 205.0L155.9 204.6L154.7 204.8L153.2 204.2L152.0 206.0M152.0 206.0L151.8 208.2L150.2 209.7L150.3 213.7L148.9 216.4L148.2 220.1L147.8 224.6L148.5 227.4L147.5 230.5L146.7 234.7L145.9 238.3L145.8 243.8L146.0 247.4L145.2 251.1L143.7 254.7L145.1 257.4L145.6 259.3L150.3 259.8M150.1 260.3L150.1 264.5M158.2 205.0L160.3 207.9L163.7 209.7L164.9 210.6L163.6 214.1L167.1 214.2L168.9 211.1M164.4 200.6L164.6 202.6L164.5 204.8L167.3 205.1L167.9 208.2L169.3 208.4L168.9 211.1M168.9 211.1L170.0 213.2L170.0 214.1L167.3 216.1L164.9 219.5M164.9 219.5L167.1 220.6L169.8 222.6L170.6 225.9M164.9 219.5L164.1 223.7L163.8 226.3M152.4 162.3L154.3 163.0L156.3 161.8L155.9 159.9L157.1 160.5L156.0 157.0L157.9 157.8L160.3 156.3L160.7 155.0M160.7 155.0L159.8 153.7L160.2 152.3L161.3 151.7L161.7 149.0M160.7 155.0L161.7 155.4L161.8 156.5L162.2 157.4L161.8 160.1L163.1 162.1L165.3 161.0L166.4 161.0M166.4 161.0L165.3 158.5L164.5 155.8L165.4 153.7M166.4 161.0L167.2 160.9L168.9 160.3M168.9 160.3L169.5 158.1L169.8 154.1M168.9 160.3L171.2 160.5L172.8 157.0M239.5 100.5L240.2 103.5L240.7 105.8L237.8 106.9L235.8 109.8L230.8 112.2L230.8 114.0M230.8 114.0L224.7 114.0M230.8 114.8L230.8 117.1L226.3 117.1L226.3 121.9L225.0 122.6L225.0 125.7L219.6 125.7M230.8 114.8L236.0 118.9L244.1 126.1L246.8 128.4L248.2 129.7M248.2 129.7L250.6 128.4L252.6 126.4L258.7 121.7M236.0 118.9L233.7 118.9L235.1 134.4L235.4 136.3L230.0 136.3L228.1 136.4L227.0 136.1L226.1 137.5M226.1 137.5L224.3 135.2L223.0 134.3L220.5 134.4L220.3 135.3M226.1 137.5L226.3 139.9L227.1 141.9M227.1 141.9L224.0 141.4L222.3 141.4L220.0 141.9M219.9 139.7L222.3 139.4L223.9 140.1L222.3 140.4L219.9 140.6M224.0 141.4L224.0 143.2L222.3 144.6M227.1 141.9L230.4 141.9L231.3 144.5L231.7 145.9M224.6 148.1L225.7 146.5L227.4 146.3L228.2 147.9L228.6 149.0M228.6 149.0L229.8 151.0L231.0 150.7M228.6 149.0L227.0 151.9M231.0 150.7L231.3 152.8L232.4 153.9L232.4 156.5M231.0 150.7L232.1 149.2L231.7 145.9M231.7 145.9L234.1 145.0L235.1 145.5M235.1 145.5L236.3 146.8L238.7 146.8M238.7 146.8L238.9 149.9L238.2 152.7L238.6 155.2M235.1 145.5L235.5 143.0L236.6 141.4L237.2 140.1L238.5 139.5L239.8 138.6L241.6 137.0L242.8 137.2M238.7 146.8L238.7 144.5L242.5 144.3L243.7 144.5M242.5 144.3L243.0 147.2L243.3 149.6L243.2 151.7L244.1 153.4M243.7 144.5L244.7 148.1L244.7 153.2M247.4 143.2L246.7 147.9L246.1 150.1L246.1 152.8M242.8 137.2L243.8 140.1L245.5 141.9L245.7 142.8L247.4 143.2M243.7 144.5L245.7 142.8M242.8 137.2L247.2 136.4L248.2 133.9L248.2 129.7M247.4 143.2L248.0 139.9L249.9 139.2L251.9 140.8L254.6 141.2L256.9 140.1L259.3 140.6L260.8 139.5M260.8 139.5L260.7 138.1L263.4 133.7L263.4 128.1L262.7 122.6M258.7 121.7L262.7 122.6M262.7 122.6L274.8 129.0M258.7 121.7L256.0 119.9L255.2 116.8L255.8 114.4L255.3 109.5M255.3 109.5L256.4 106.7L258.0 105.3L258.0 104.0M255.3 109.5L253.7 105.3L252.6 102.9L253.7 100.7L254.1 97.3M276.2 106.9L276.2 124.4M276.2 124.4L292.2 124.4M276.2 124.4L276.2 128.1L274.8 128.1L274.8 129.0M274.8 129.0L274.8 135.9L272.8 139.0L272.8 141.4L272.0 141.5L273.4 144.5L273.4 144.6M273.4 144.6L271.7 145.4L268.1 148.1L267.6 149.9L264.7 150.5L263.4 150.8M263.4 150.8L262.7 149.0L261.4 146.3L262.7 146.3L262.8 144.5L262.2 142.3L261.6 141.7L261.4 140.6L260.8 139.5M261.6 141.9L260.4 146.1L259.1 149.0L258.0 152.1L256.0 151.9L254.6 153.7L254.1 155.8M263.4 150.8L262.2 153.2L262.0 155.4L263.0 157.4L264.2 160.5M264.2 160.5L260.4 160.5L257.7 160.5L255.7 160.3M257.7 160.5L257.7 162.7L255.7 162.7M260.4 160.5L260.3 162.1L261.9 162.1L261.2 164.5L262.0 165.6L261.9 168.0L260.0 168.9L259.3 170.0L258.1 169.4L257.6 171.6M264.2 160.5L264.7 158.7L267.6 158.1M267.6 158.1L266.9 160.5L266.5 164.5L264.9 167.8L264.1 170.5L263.0 172.3L261.9 173.4L260.6 173.4L260.0 172.9L260.0 175.1L259.1 175.4M258.7 173.6L260.0 172.9M267.6 158.1L267.6 156.5L268.8 155.4L272.8 157.0L275.5 155.2L279.4 155.2M273.4 144.6L274.4 146.5L274.2 148.6L276.4 150.3L278.1 152.5L279.4 155.2M279.4 155.2L282.2 156.5L284.0 158.1M284.0 158.1L285.6 157.9L288.3 156.8L290.9 156.1M290.9 156.1L289.7 154.5L288.3 149.9L287.0 149.9L288.4 147.2L288.7 145.2L290.7 141.4L291.7 138.4M291.7 138.4L291.5 137.0L292.3 133.3L294.5 131.7M291.7 138.4L293.7 137.9L296.4 138.1L299.6 141.7M299.6 141.7L298.8 144.5L300.3 144.5L300.7 143.5M300.3 144.5L300.4 147.2L301.8 148.1L305.8 149.9L307.2 149.9L303.1 155.4L301.1 155.8L299.1 156.8L297.7 157.4M297.7 157.4L295.7 158.3L293.7 157.9L291.7 156.5L290.9 156.1M297.7 157.4L297.7 164.5L297.7 166.1L298.5 167.6M288.3 156.8L289.0 159.0L289.7 161.2L288.3 164.1L288.2 166.3M288.2 166.3L293.2 170.0L295.3 173.1M284.0 158.1L284.3 160.3L282.9 162.7L282.4 165.4L282.4 167.1M282.4 167.1L283.6 166.3L288.2 166.3M283.6 166.3L284.0 168.9L283.6 170.5L282.9 172.5L282.1 172.7M282.4 167.1L281.8 169.4L282.1 172.7M281.6 169.4L283.6 168.9M282.1 172.7L282.4 176.3L283.9 179.4M283.9 179.4L286.8 181.6L288.3 181.8M289.1 185.6L293.0 185.8L295.0 184.9L296.9 183.5M288.3 181.8L289.1 185.6L289.5 189.1L290.7 191.1L290.7 193.7L290.1 195.7L288.8 194.0L289.0 190.9L287.0 190.0L287.0 187.3L287.4 184.2L286.8 181.6M283.9 179.4L281.4 180.0L280.8 181.4L281.0 184.5L282.6 186.7L282.6 188.9L280.8 187.3L279.1 185.6L276.6 185.1L275.4 185.3L274.7 184.4M274.7 184.4L272.4 184.9L271.9 181.8L271.9 177.8L268.8 177.3L268.1 179.1L266.1 179.3L264.9 175.4L261.4 175.3L259.1 175.4M274.7 184.4L274.8 188.2L272.1 188.2L272.1 194.0L274.0 196.6M258.4 196.0L261.4 196.2L267.3 196.2L271.3 197.3L274.0 196.6L276.6 196.9M270.8 197.8L270.8 204.6L269.4 204.6L269.4 209.7L269.4 216.3L265.4 215.7L264.7 216.6M269.4 209.7L270.5 213.3L273.1 211.0L275.8 211.5L277.4 209.5L278.9 207.5L282.1 205.0M282.1 205.0L279.8 201.9L277.8 200.0L276.6 196.9M276.6 196.9L278.9 197.1L281.4 193.5L283.5 192.9M283.5 192.9L284.7 193.7L286.8 194.9L286.7 197.3L286.6 200.0L286.3 203.3L284.7 205.3M283.5 192.9L283.2 191.5L287.0 190.0M282.1 205.0L284.7 205.3M284.7 205.3L285.6 209.1L285.6 211.7L286.8 213.3M284.3 211.3L285.6 211.9L285.7 213.3L284.3 214.2L284.0 212.6L284.3 211.3M278.9 218.4L281.0 216.6L282.1 218.3L280.6 220.3L279.4 219.7L278.9 218.4M230.5 88.1L231.5 88.0L233.6 88.1L234.1 88.9L233.2 90.0L233.1 92.2L232.4 92.3L233.1 93.8L232.7 95.3L232.5 96.7M240.1 85.4L243.4 86.7L246.8 87.2M245.9 71.4L248.2 73.4L250.3 74.3L251.1 74.3L253.5 75.2L252.7 77.8M252.7 77.8L250.6 80.3L251.9 80.9L251.9 84.0L252.6 84.7M247.1 70.8L249.2 70.8L250.4 71.9L250.6 71.9M251.1 74.3L250.6 71.9M250.6 71.9L250.6 70.1L251.9 69.2L252.2 67.4M254.1 64.5L255.7 64.6M261.6 66.3L261.9 68.8L262.3 70.1L262.7 71.6M262.7 71.6L259.3 72.8L258.9 72.8L261.1 75.6M261.1 75.6L260.0 77.9L256.6 77.9L255.4 77.9M252.7 77.8L255.4 77.9L255.3 78.9M251.9 80.9L254.0 80.3L254.6 80.9L256.5 79.8L256.6 79.0L255.3 78.9M256.6 79.0L258.9 78.9L261.0 79.8M261.1 75.6L262.7 75.2L265.4 75.9L265.5 77.0M265.5 77.0L264.2 79.0L261.0 79.8L260.8 81.4M262.7 71.6L265.3 72.7L267.8 74.3L272.9 75.0M267.8 74.3L265.4 75.9M265.5 77.0L267.8 77.4L270.1 76.1L272.3 76.3M272.9 75.0L274.8 71.9L274.3 70.7L274.2 68.8L274.7 66.3L274.2 66.1M268.9 65.4L273.2 65.4L274.2 66.1M270.9 63.7L272.9 64.3L273.2 65.4M274.2 66.1L277.3 64.5L278.3 63.0M270.8 62.3L274.8 61.9L278.3 63.0M275.2 59.0L277.5 59.2L279.4 59.7M278.3 63.0L280.5 62.1L279.4 59.7L279.5 57.9L280.2 56.1M280.0 54.3L282.9 51.5L284.9 49.9L282.9 47.9L282.5 44.2L281.6 41.1L280.9 39.7L281.6 38.8L284.1 37.7M281.4 38.8L277.5 37.1L275.9 39.5L272.7 39.3L270.3 38.6M270.3 38.6L274.3 40.8L274.4 43.9L275.0 44.6M270.3 38.6L266.8 39.7L264.2 42.4L262.0 44.1L260.8 47.0L258.8 48.8L258.9 52.4L259.5 54.3L258.4 56.4L257.6 57.0M274.3 70.7L278.9 70.5L283.6 71.0L285.3 69.6M280.5 62.1L284.1 63.2L284.3 65.2L286.3 67.4L285.3 69.6M285.3 69.6L288.8 70.1L290.3 72.7L293.7 73.6L296.5 74.1L296.1 77.4L294.0 78.7M272.3 76.3L273.4 77.0L276.0 77.6L278.3 76.5L279.5 76.1L281.8 77.0L282.9 79.9L280.5 81.6L282.5 82.0M278.3 76.5L280.4 79.0L280.5 81.6M273.4 77.0L271.1 79.9L269.8 80.5M269.8 80.5L268.0 80.9L265.4 80.7L264.7 79.8L264.2 79.0M269.8 80.5L271.3 82.7L272.8 83.0L273.1 84.0M273.1 84.0L274.8 84.9L278.9 84.1L281.0 84.9M273.1 84.0L272.7 86.1L272.7 87.4L273.5 89.2M273.5 89.2L275.5 88.9L277.7 89.2L278.1 88.5L280.2 88.0M277.7 89.2L277.9 90.0M269.4 92.2L270.5 90.0L273.5 89.2M270.5 90.0L270.1 87.6L268.6 88.1M268.0 80.9L268.6 82.7L268.4 85.2L269.8 86.5L270.1 87.6L272.7 87.4M268.6 82.7L265.3 82.1L263.8 82.1L264.3 84.3L266.2 86.1L267.4 87.1M260.8 81.6L263.1 81.6L264.7 79.8M291.3 98.9L291.9 97.4L293.7 97.4L296.4 97.4L299.6 96.9M299.6 96.9L302.9 96.7L302.0 94.3L301.8 92.7L302.9 92.2M302.9 92.2L301.2 91.2L301.2 89.6L299.8 88.9L298.4 88.9M296.4 85.4L299.1 85.8L301.5 86.9L303.8 87.1L305.1 88.1M305.1 88.1L304.9 89.4L303.1 89.2L301.2 89.6M303.1 89.2L304.5 91.2L305.1 92.5L305.1 93.6M305.1 88.1L306.9 89.4L308.0 88.3M302.9 92.2L305.1 93.6L307.2 92.2L308.4 94.5M299.6 96.9L298.0 101.1L294.8 103.6M294.8 103.6L292.1 105.6L290.7 104.9M290.7 104.9L290.9 103.8L291.7 102.2L291.0 101.5M289.8 104.2L290.7 103.8M288.6 107.5L289.5 110.7M290.7 104.9L290.3 107.1L289.7 110.7M294.8 103.6L295.3 105.8L292.3 107.1L293.7 108.9L293.0 109.8L291.0 111.3L289.7 111.1M295.3 105.8L296.9 106.4L299.1 107.8L302.7 111.3L305.1 111.5L306.5 112.6L307.7 112.6M305.1 111.5L306.8 109.7L307.2 109.8M302.9 96.7L304.5 98.9L303.7 101.6L304.5 104.2L306.8 107.1L307.2 109.8M300.2 134.6L300.7 132.8L302.3 132.8L305.8 133.5L307.2 131.3L312.6 129.9M312.6 129.9L316.6 128.1L317.5 124.4L316.9 123.1L313.4 122.8L312.0 120.4M316.9 123.1L317.9 120.6L318.5 119.1M312.6 129.9L314.0 134.3M310.9 119.5L311.5 119.7M315.1 96.5L317.9 95.3L320.6 96.0L323.3 97.8L324.9 97.8L324.9 99.6M324.9 99.6L324.1 102.5L324.4 107.1L325.8 107.3L324.5 110.2L325.8 111.7L327.1 113.1L327.1 114.9L327.8 115.8L325.8 118.8M324.5 110.2L326.7 110.9L329.4 110.7L331.8 110.0L332.4 107.6L335.9 106.4L336.8 103.5L338.2 102.4L339.0 98.2L341.5 97.3L343.4 96.7M324.9 99.6L327.4 99.3L329.4 98.0L332.1 96.3L334.1 97.1L336.1 96.2L337.5 94.7L338.7 95.4L339.0 97.6L341.5 96.3L343.4 96.7M332.1 96.3L329.4 93.6L326.7 91.6L324.7 89.4L323.3 87.6L321.3 86.7L319.3 89.2L317.9 89.2L317.9 82.5L321.3 81.4M317.9 89.2L315.2 87.4L313.2 88.3M321.3 81.4L324.7 83.8L326.0 85.2L329.9 84.9L331.4 86.3L331.6 88.0L334.1 89.8L335.5 89.2L337.5 88.0L338.2 87.4M338.2 87.4L341.5 86.1L342.6 85.8L344.9 86.3L350.5 87.6M350.5 87.6L347.6 89.8L345.6 90.7L342.2 91.4L341.8 92.5M341.8 92.5L343.4 94.3L343.4 96.7M341.8 92.5L338.2 92.5L336.1 91.6L337.7 90.2L338.2 87.4M336.1 91.6L334.1 92.5L333.4 94.3L334.1 97.1M308.5 80.1L305.8 77.0L305.1 76.1L306.5 72.8L308.2 73.6L310.9 70.3L315.9 71.6L319.3 71.7L322.7 72.3L325.4 71.6L324.7 69.2L324.7 67.0L327.4 65.7L331.4 65.0L335.5 63.7L338.2 65.7L341.5 66.8L345.6 65.7L346.9 67.4L350.3 71.9L355.0 71.6L357.4 74.1L360.1 74.8M360.1 74.8L358.4 76.1L358.0 78.5L354.3 78.5L353.6 81.6L351.0 82.5L350.5 87.6M360.1 74.8L363.1 73.8L366.4 71.9L370.5 73.4L374.5 72.3L374.9 69.7L380.2 70.8L380.3 72.3L386.0 72.8L388.7 74.5L392.0 74.5L395.4 73.0L399.7 73.8M360.8 74.8L361.7 76.5L364.8 79.4L365.1 82.1L371.2 84.0L372.5 86.7L378.6 86.9L384.0 88.7L390.0 87.1L393.1 84.9L393.3 82.5L396.1 82.5L398.5 81.4L403.5 79.4L401.2 77.6L398.5 77.4L399.7 73.8M399.7 73.8L403.2 73.0L404.8 68.8L408.9 67.0L412.3 68.3L414.3 72.8L418.3 75.4L419.0 77.6L424.0 76.5L421.7 82.1L419.3 82.9L419.3 85.2L418.4 87.2M418.4 87.2L414.9 88.0L415.2 89.1L412.9 88.9L410.0 91.6M412.4 95.6L415.5 94.2M388.0 125.3L386.2 123.5L384.4 122.0L380.2 123.5L378.8 125.9L377.5 125.3L375.9 124.4L375.6 120.8L374.0 120.4L375.3 117.1L374.8 114.2L373.7 112.9M373.7 112.9L372.1 111.1L369.8 111.3L366.4 114.0L362.3 114.8L361.2 113.7L358.4 113.5L355.7 112.0L353.0 109.5L351.9 109.5L348.9 107.6L348.5 105.3L349.6 104.4L348.7 102.0L347.3 99.8L344.9 98.0L343.4 96.7M351.9 109.5L350.4 112.0L354.6 114.6L357.7 115.8L361.2 116.2L361.2 113.7M362.3 114.8L363.1 115.7L366.4 115.5L366.4 114.0M361.2 116.4L361.7 118.9L361.2 119.9L362.1 122.2L362.4 124.6M362.1 116.8L363.5 117.3L363.5 118.6L366.7 118.9L365.4 120.8L365.5 122.6L366.8 121.3L366.8 124.4L367.3 125.7M373.7 112.9L372.1 114.8L370.5 116.6L369.9 118.9L368.3 120.8L368.2 124.0L367.3 125.7M334.4 121.3L338.2 119.9L337.1 117.7L336.1 115.3L337.5 113.5L340.6 111.7L342.2 108.9L343.0 106.6L343.9 105.3L342.2 104.4L342.2 101.3L346.0 99.6L347.3 99.8M378.8 125.9L377.4 127.5L374.5 128.6L373.9 130.8L375.5 134.8L374.8 136.8L376.1 140.4L376.5 143.4L375.6 145.5M377.4 127.5L377.9 129.0L378.8 129.0L378.8 132.6L380.2 131.7L382.6 131.2L383.7 134.4L384.6 136.3L384.8 138.4M380.2 123.5L381.3 126.6L383.8 128.1L382.6 129.1L384.2 131.0L386.0 133.9L387.3 136.3L387.3 138.1M380.6 142.6L380.5 139.7L381.9 138.3L384.8 138.4L387.3 138.1L387.3 142.1L385.3 143.2L385.2 144.5L383.3 145.5M377.4 152.7L378.6 153.9L380.1 153.2M390.2 160.9L390.7 162.7L393.1 162.7L396.8 161.8L398.1 159.0L398.1 156.7L400.9 156.8M432.5 169.2L432.5 181.1" fill="none" stroke="#7c7c92" stroke-width="1"/>
<path d="M26 0h1v329h-1zM53 0h1v329h-1zM80 0h1v329h-1zM107 0h1v329h-1zM134 0h1v329h-1zM161 0h1v329h-1zM188 0h1v329h-1zM215 0h1v329h-1zM242 0h1v329h-1zM269 0h1v329h-1zM296 0h1v329h-1zM323 0h1v329h-1zM350 0h1v329h-1zM377 0h1v329h-1zM404 0h1v329h-1zM431 0h1v329h-1zM458 0h1v329h-1zM0 310h486v1h-486zM0 292h486v1h-486zM0 273h486v1h-486zM0 255h486v1h-486zM0 237h486v1h-486zM0 219h486v1h-486zM0 200h486v1h-486zM0 182h486v1h-486zM0 164h486v1h-486zM0 146h486v1h-486zM0 128h486v1h-486zM0 109h486v1h-486zM0 91h486v1h-486zM0 73h486v1h-486zM0 55h486v1h-486zM0 36h486v1h-486zM0 18h486v1h-486z" fill="#c6c8da"/>
<rect x="1" y="36" width="484" height="13" fill="url(#p1)"/>
<rect x="1" y="50" width="484" height="43" fill="url(#p2)"/>
<rect x="1" y="96" width="484" height="137" fill="url(#p1)"/>
<rect x="1" y="236" width="484" height="43" fill="url(#p2)"/>
<rect x="1" y="280" width="484" height="13" fill="url(#p1)"/>
<rect x="1" y="25" width="484" height="6" fill="url(#pp)"/>
<rect x="1" y="295" width="484" height="11" fill="url(#pp)"/>
<path d="M4 318h1v1h-1zM6 323h1v1h-1zM8 318h1v1h-1zM10 323h1v1h-1zM12 318h1v1h-1zM14 323h1v1h-1zM16 318h1v1h-1zM18 323h1v1h-1zM20 318h1v1h-1zM22 323h1v1h-1zM30 323h1v1h-1zM32 318h1v1h-1zM34 323h1v1h-1zM36 318h1v1h-1zM38 323h1v1h-1zM40 318h1v1h-1zM42 323h1v1h-1zM44 318h1v1h-1zM46 323h1v1h-1zM48 318h1v1h-1zM50 323h1v1h-1zM56 318h1v1h-1zM58 323h1v1h-1zM60 318h1v1h-1zM62 323h1v1h-1zM64 318h1v1h-1zM66 323h1v1h-1zM68 318h1v1h-1zM70 323h1v1h-1zM72 318h1v1h-1zM74 323h1v1h-1zM76 318h1v1h-1zM84 318h1v1h-1zM86 323h1v1h-1zM88 318h1v1h-1zM90 323h1v1h-1zM92 318h1v1h-1zM94 323h1v1h-1zM96 318h1v1h-1zM98 323h1v1h-1zM100 318h1v1h-1zM102 323h1v1h-1zM104 318h1v1h-1zM110 323h1v1h-1zM112 318h1v1h-1zM114 323h1v1h-1zM116 318h1v1h-1zM118 323h1v1h-1zM120 318h1v1h-1zM122 323h1v1h-1zM124 318h1v1h-1zM126 323h1v1h-1zM128 318h1v1h-1zM130 323h1v1h-1zM138 323h1v1h-1zM140 318h1v1h-1zM142 323h1v1h-1zM144 318h1v1h-1zM146 323h1v1h-1zM148 318h1v1h-1zM150 323h1v1h-1zM152 318h1v1h-1zM154 323h1v1h-1zM156 318h1v1h-1zM158 323h1v1h-1zM164 318h1v1h-1zM166 323h1v1h-1zM168 318h1v1h-1zM170 323h1v1h-1zM172 318h1v1h-1zM174 323h1v1h-1zM176 318h1v1h-1zM178 323h1v1h-1zM180 318h1v1h-1zM182 323h1v1h-1zM184 318h1v1h-1zM192 318h1v1h-1zM194 323h1v1h-1zM196 318h1v1h-1zM198 323h1v1h-1zM200 318h1v1h-1zM202 323h1v1h-1zM204 318h1v1h-1zM206 323h1v1h-1zM208 318h1v1h-1zM210 323h1v1h-1zM212 318h1v1h-1zM218 323h1v1h-1zM220 318h1v1h-1zM222 323h1v1h-1zM224 318h1v1h-1zM226 323h1v1h-1zM228 318h1v1h-1zM230 323h1v1h-1zM232 318h1v1h-1zM234 323h1v1h-1zM236 318h1v1h-1zM238 323h1v1h-1zM246 323h1v1h-1zM248 318h1v1h-1zM250 323h1v1h-1zM252 318h1v1h-1zM254 323h1v1h-1zM256 318h1v1h-1zM258 323h1v1h-1zM260 318h1v1h-1zM262 323h1v1h-1zM264 318h1v1h-1zM266 323h1v1h-1zM272 318h1v1h-1zM274 323h1v1h-1zM276 318h1v1h-1zM278 323h1v1h-1zM280 318h1v1h-1zM282 323h1v1h-1zM284 318h1v1h-1zM286 323h1v1h-1zM288 318h1v1h-1zM290 323h1v1h-1zM292 318h1v1h-1zM300 318h1v1h-1zM302 323h1v1h-1zM304 318h1v1h-1zM306 323h1v1h-1zM308 318h1v1h-1zM310 323h1v1h-1zM312 318h1v1h-1zM314 323h1v1h-1zM316 318h1v1h-1zM318 323h1v1h-1zM320 318h1v1h-1zM326 323h1v1h-1zM328 318h1v1h-1zM330 323h1v1h-1zM332 318h1v1h-1zM334 323h1v1h-1zM336 318h1v1h-1zM338 323h1v1h-1zM340 318h1v1h-1zM342 323h1v1h-1zM344 318h1v1h-1zM346 323h1v1h-1zM354 323h1v1h-1zM356 318h1v1h-1zM358 323h1v1h-1zM360 318h1v1h-1zM362 323h1v1h-1zM364 318h1v1h-1zM366 323h1v1h-1zM368 318h1v1h-1zM370 323h1v1h-1zM372 318h1v1h-1zM374 323h1v1h-1zM380 318h1v1h-1zM382 323h1v1h-1zM384 318h1v1h-1zM386 323h1v1h-1zM388 318h1v1h-1zM390 323h1v1h-1zM392 318h1v1h-1zM394 323h1v1h-1zM396 318h1v1h-1zM398 323h1v1h-1zM400 318h1v1h-1zM408 318h1v1h-1zM410 323h1v1h-1zM412 318h1v1h-1zM414 323h1v1h-1zM416 318h1v1h-1zM418 323h1v1h-1zM420 318h1v1h-1zM422 323h1v1h-1zM424 318h1v1h-1zM426 323h1v1h-1zM428 318h1v1h-1zM434 323h1v1h-1zM436 318h1v1h-1zM438 323h1v1h-1zM440 318h1v1h-1zM442 323h1v1h-1zM444 318h1v1h-1zM446 323h1v1h-1zM448 318h1v1h-1zM450 323h1v1h-1zM452 318h1v1h-1zM454 323h1v1h-1zM462 323h1v1h-1zM464 318h1v1h-1zM466 323h1v1h-1zM468 318h1v1h-1zM470 323h1v1h-1zM472 318h1v1h-1zM474 323h1v1h-1zM476 318h1v1h-1zM478 323h1v1h-1zM480 318h1v1h-1zM482 323h1v1h-1z" fill="#a3a3c0"/>
<path d="M0 22h486v1h-486zM0 34h486v1h-486zM0 49h486v1h-486zM0 94h486v1h-486zM0 234h486v1h-486zM0 279h486v1h-486zM0 294h486v1h-486zM0 306h486v1h-486z" fill="#ff0000"/>
<path d="M0 0h486v329h-486zM1 1v327h484v-327z" fill="#000" fill-rule="evenodd"/>
</svg>
</body></html>
